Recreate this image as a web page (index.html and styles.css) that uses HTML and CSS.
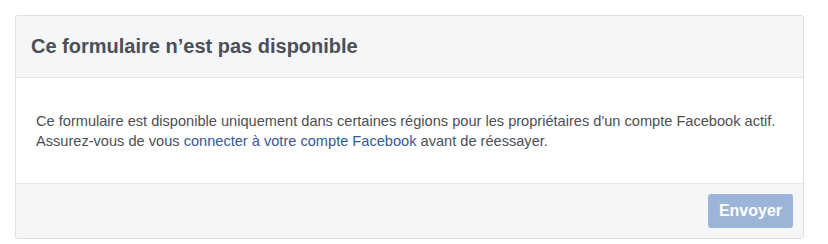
FILE: index.html
```html
<!DOCTYPE html>
<html lang="fr">
<head>
  <meta charset="UTF-8" />
  <meta name="viewport" content="width=device-width, initial-scale=1.0"/>
  <title>Formulaire</title>
  <link rel="stylesheet" href="styles.css">
</head>
<body>
  <!-- Dialog card -->
  <div class="card">
    <div class="card-header">
      <h2>Ce formulaire n’est pas disponible</h2>
    </div>
    <div class="card-body">
      <p>Ce formulaire est disponible uniquement dans certaines régions pour les propriétaires d'un compte Facebook actif.<br>
      Assurez-vous de vous <a href="#">connecter à votre compte Facebook</a> avant de réessayer.</p>
    </div>
    <div class="card-footer">
      <button class="send-btn" disabled>Envoyer</button>
    </div>
  </div>
</body>
</html>
```

FILE: styles.css
```css
/* Page */
html, body {
  margin: 0;
  padding: 0;
  background: #ffffff;
  font-family: 'Liberation Sans', Arial, sans-serif;
}

body {
  padding: 15px;
}

/* Card */
.card {
  width: 787px;
  border: 1px solid #dddfe2;
  border-radius: 3px;
  overflow: hidden;
}

.card-header {
  background: #f5f6f7;
  border-bottom: 1px solid #e5e5e5;
  padding: 0 15px;
  height: 61px;
  display: flex;
  align-items: center;
}

h2 {
  margin: 0;
  font-size: 20px;
  font-weight: bold;
  color: #4b4f56;
}

.card-body {
  padding: 33px 20px 32px;
}

.card-body p {
  margin: 0;
  font-size: 14.6px;
  line-height: 20px;
  color: #4b4f56;
}

.card-body a {
  color: #365899;
  text-decoration: none;
}

/* Footer */
.card-footer {
  background: #f5f6f7;
  border-top: 1px solid #e5e5e5;
  padding: 10px;
  display: flex;
  justify-content: flex-end;
}

.send-btn {
  height: 34px;
  width: 85px;
  border: none;
  border-radius: 3px;
  background: #9cb4d8;
  color: #ffffff;
  font-family: inherit;
  font-size: 16px;
  font-weight: bold;
  padding: 0;
}
```
